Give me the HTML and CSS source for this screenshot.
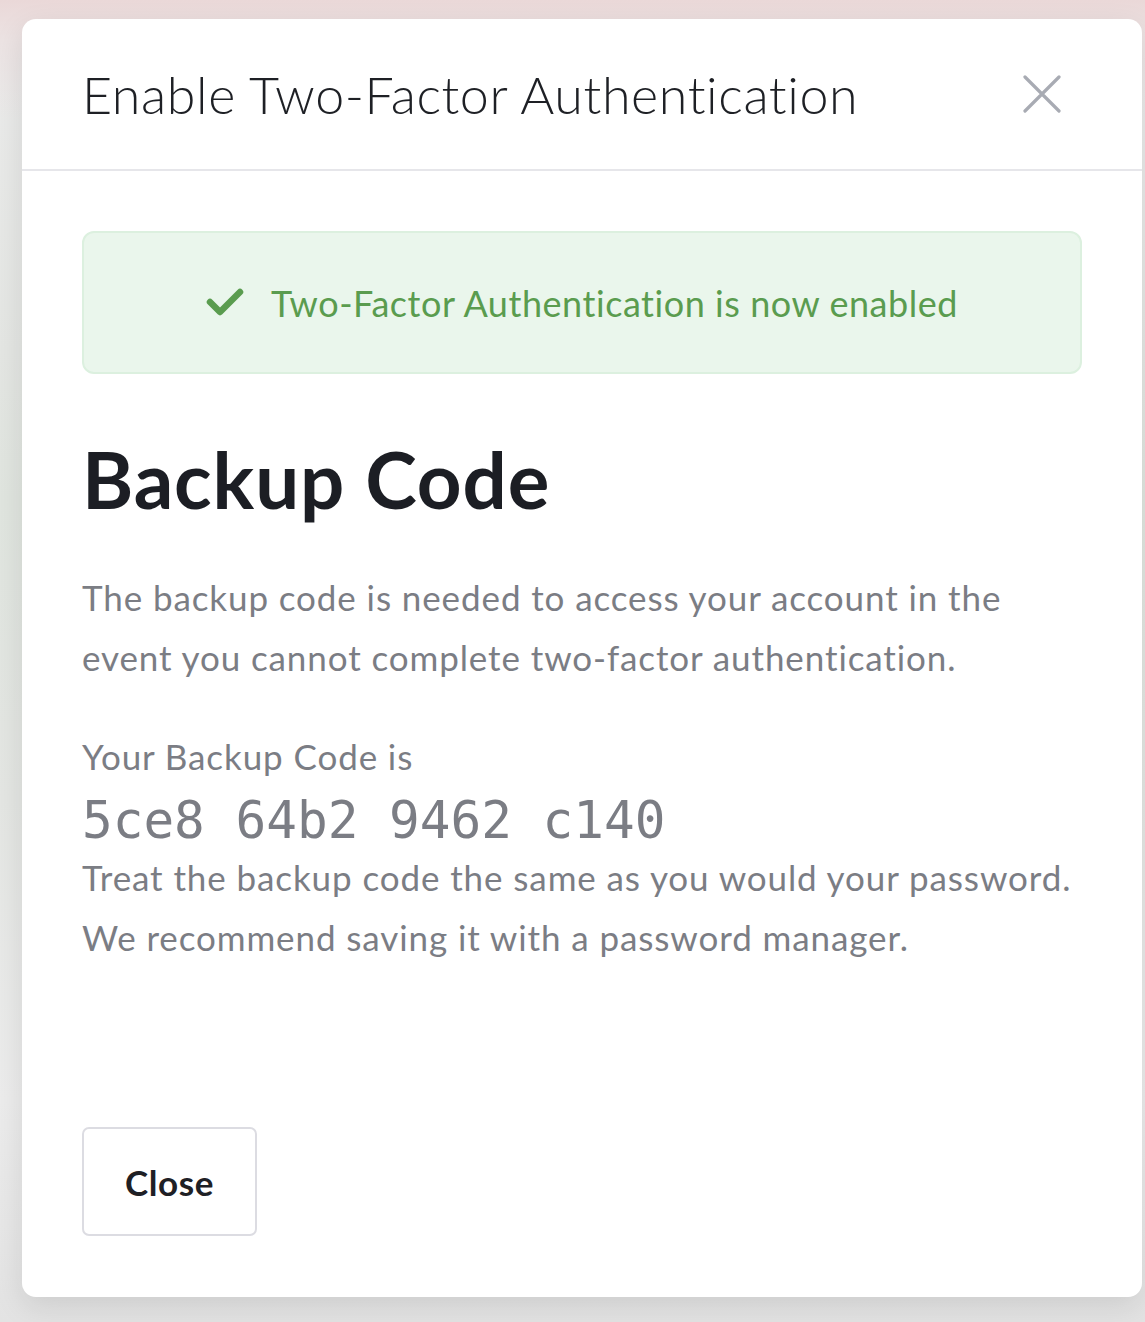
FILE: index.html
```html
<!DOCTYPE html>
<html lang="en">
<head>
<meta charset="utf-8">
<title>Enable Two-Factor Authentication</title>
<link rel="stylesheet" href="styles.css">
</head>
<body>
<div class="modal">
  <div class="modal-header">
    <h1 class="modal-title">Enable Two-Factor Authentication</h1>
    <button class="icon-close" aria-label="Close">
      <svg width="38" height="38" viewBox="0 0 38 38"><path d="M2 2 L36 36 M36 2 L2 36" stroke="#a8abb3" stroke-width="3.2" stroke-linecap="round" fill="none"/></svg>
    </button>
  </div>
  <div class="modal-body">
    <div class="alert">
      <svg class="check" width="38" height="28" viewBox="0 0 38 28"><path d="M4 14 L14 24 L34 4" stroke="#5a9c4f" stroke-width="6.5" stroke-linecap="round" stroke-linejoin="round" fill="none"/></svg>
      <span>Two-Factor Authentication is now enabled</span>
    </div>
    <h2 class="heading">Backup Code</h2>
    <p class="text">The backup code is needed to access your account in the event you cannot complete two-factor authentication.</p>
    <div class="code-block">
      <div class="text">Your Backup Code is</div>
      <div class="code">5ce8 64b2 9462 c140</div>
      <div class="text">Treat the backup code the same as you would your password. We recommend saving it with a password manager.</div>
    </div>
    <div class="actions">
      <button class="btn">Close</button>
    </div>
  </div>
</div>
</body>
</html>
```
FILE: styles.css
```css
html, body {
  margin: 0;
  padding: 0;
}
body {
  width: 1145px;
  height: 1322px;
  overflow: hidden;
  box-sizing: border-box;
  padding: 19px 3px 0 22px;
  background:
    linear-gradient(to bottom, #ead8d8 0px, #ece3e3 40px, rgba(236,236,236,0) 120px),
    linear-gradient(to bottom, #ececec 0px, #e4e6e3 350px, #e0e5df 500px, #e4e6e3 800px, #ececec 1100px, #e3e3e3 1322px);
  font-family: "Lato", "Noto Sans", sans-serif;
  font-variant-ligatures: none;
}
.modal {
  width: 1120px;
  height: 1278px;
  background: #fff;
  border-radius: 14px;
  box-shadow: 0 10px 30px rgba(0,0,0,0.10);
  display: flex;
  flex-direction: column;
}
.modal-header {
  height: 152px;
  box-sizing: border-box;
  border-bottom: 2px solid #e6e6ea;
  display: flex;
  align-items: center;
  justify-content: space-between;
  padding: 0 81px 0 60px;
}
.modal-title {
  margin: 0;
  font-size: 52px;
  font-weight: 300;
  letter-spacing: 0.6px;
  color: #1e2025;
}
.icon-close {
  border: 0;
  background: none;
  padding: 0;
  width: 38px;
  height: 38px;
  display: flex;
}
.modal-body {
  padding: 60px;
  display: flex;
  flex-direction: column;
  flex: 1;
}
.alert {
  height: 143px;
  box-sizing: border-box;
  background: #eaf6ec;
  border: 2px solid #dcf0df;
  border-radius: 12px;
  display: flex;
  align-items: center;
  justify-content: center;
  gap: 27px;
  color: #5a9c4f;
  font-size: 36px;
  letter-spacing: 0.55px;
}
.check {
  margin-top: -2px;
}
.heading {
  margin: 59px 0 0;
  font-size: 78px;
  font-weight: 700;
  letter-spacing: 0.9px;
  color: #1c1e24;
  line-height: 1.2;
}
.text {
  margin: 0;
  font-size: 35px;
  letter-spacing: 0.9px;
  line-height: 60px;
  color: #7b7d84;
}
p.text {
  margin-top: 40px;
}
.code-block {
  margin-top: 39px;
}
.code {
  font-family: "DejaVu Sans Mono", monospace;
  font-size: 51px;
  line-height: 52px;
  padding-top: 9px;
  letter-spacing: 0;
  color: #7b7d84;
}
.actions {
  margin-top: auto;
}
.btn {
  width: 175px;
  height: 109px;
  background: #fff;
  border: 2px solid #dcdce2;
  border-radius: 7px;
  font-family: "Lato", "Noto Sans", sans-serif;
  font-weight: 700;
  font-size: 35px;
  letter-spacing: 0.6px;
  color: #1e2025;
  margin-bottom: 1px;
}
```
